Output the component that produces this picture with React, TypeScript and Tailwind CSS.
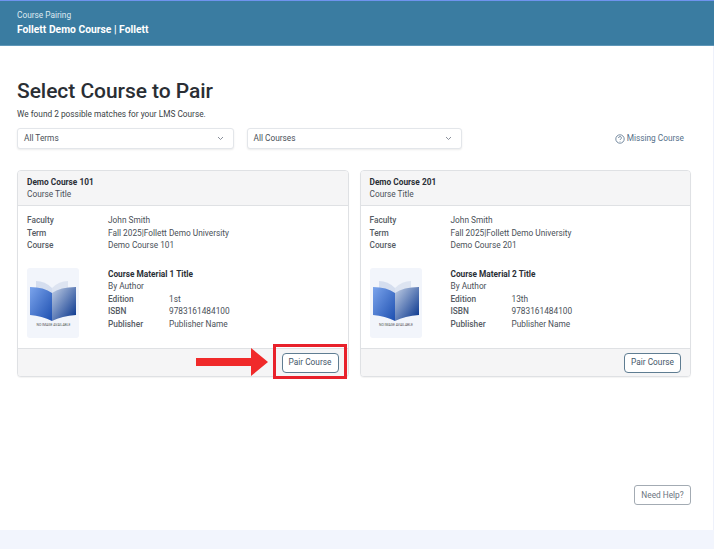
import React from "react";

function Book({ id }: { id: string }) {
  return (
    <div className="w-[52px] h-[70px] rounded-[3px] bg-[#f2f5fb] flex flex-col items-start pl-[1px] pt-[3px] shrink-0">
      <svg width="48" height="52" viewBox="0 0 48 52">
        <defs>
          <linearGradient id={id + "l"} x1="0" y1="0" x2="1" y2="1">
            <stop offset="0" stopColor="#7ba4ec" />
            <stop offset="1" stopColor="#1d4fb0" />
          </linearGradient>
          <linearGradient id={id + "r"} x1="0" y1="0" x2="1" y2="1">
            <stop offset="0" stopColor="#c3d0e6" />
            <stop offset="1" stopColor="#002f8a" />
          </linearGradient>
        </defs>
        <path d="M8 10 Q17 10 24 17 L24 36 L8 36 Z" fill="#d5deef" />
        <path d="M40 10 Q31 10 24 17 L24 36 L40 36 Z" fill="#dde4f1" />
        <path d="M2 16 Q16 16 24 22 L24 50 Q14 45 2 44 Z" fill={`url(#${id}l)`} />
        <path d="M48 16 Q32 16 24 22 L24 50 Q34 45 48 44 Z" fill={`url(#${id}r)`} />
      </svg>
      <span className="w-full text-center text-[3.4px] leading-[4px] text-[#555] whitespace-nowrap">NO IMAGE AVAILABLE</span>
    </div>
  );
}

function Card({ code, material, edition }: { code: string; material: string; edition: string }) {
  return (
    <div className="flex-1 border border-[#dfe1e4] rounded-[4px] bg-white overflow-hidden shadow-[0_1px_1px_rgba(0,0,0,0.05)]">
      <div className="h-[35px] bg-[#f5f5f6] border-b border-[#dfe1e4] pl-[9px] pt-[5px]">
        <div className="font-bold text-[#2a2f36] leading-[12px]">{code}</div>
        <div className="text-[#4a5058] leading-[12px]">Course Title</div>
      </div>
      <div className="h-[142px] pl-[9px] pt-[8px] leading-[12.5px] text-[#4a5058]">
        <div className="grid grid-cols-[81px_1fr]">
          <span className="font-medium text-[#565c64]">Faculty</span><span>John Smith</span>
          <span className="font-medium text-[#565c64]">Term</span><span>Fall 2025|Follett Demo University</span>
          <span className="font-medium text-[#565c64]">Course</span><span>{code}</span>
        </div>
        <div className="flex gap-[29px] mt-[16px]">
          <Book id={code.replace(/ /g, "")} />
          <div>
            <div className="font-bold text-[#2a2f36]">{material}</div>
            <div>By Author</div>
            <div className="grid grid-cols-[61px_1fr]">
              <span className="font-medium text-[#565c64]">Edition</span><span>{edition}</span>
              <span className="font-medium text-[#565c64]">ISBN</span><span>9783161484100</span>
              <span className="font-medium text-[#565c64]">Publisher</span><span>Publisher Name</span>
            </div>
          </div>
        </div>
      </div>
      <div className="h-[28px] bg-[#f5f5f6] border-t border-[#dfe1e4] flex items-center justify-end pr-[9px]">
        <button className="w-[57px] h-[20px] border border-[#5f7d92] rounded-[4px] bg-white text-[#3f5568] text-[8.3px]">Pair Course</button>
      </div>
    </div>
  );
}

function Select({ label, width }: { label: string; width: string }) {
  return (
    <div className={`${width} h-[21px] border border-[#e3e6ea] rounded-[3px] bg-white shadow-[0_1px_2px_rgba(0,0,0,0.08)] flex items-center justify-between pl-[6px] pr-[9px] text-[#4a5058]`}>
      <span>{label}</span>
      <svg width="7" height="5" viewBox="0 0 7 5" fill="none" stroke="#6b7280" strokeWidth="0.8"><path d="M1 1l2.5 2.5L6 1" /></svg>
    </div>
  );
}

export default function App() {
  return (
    <div className="relative w-[714px] h-[549px] overflow-hidden bg-white text-[8.3px] font-['Roboto',sans-serif]">
      <div className="h-[46px] bg-[#3a7ca1] border-t border-[#6f93ee] border-b-[#5f97b8] border-b pl-[17px] pt-[9px] text-white">
        <div className="leading-[11px] text-[#dfeaf1]">Course Pairing</div>
        <div className="text-[10.3px] font-bold leading-[14px] mt-[2px]">Follett Demo Course | Follett</div>
      </div>
      <div className="h-[484px] pl-[17px] pr-[22px] pt-[33px] border-r border-[#eef1fb]">
        <h1 className="text-[21px] leading-[24px] font-medium tracking-[-0.05px] text-[#2a2e34]">Select Course to Pair</h1>
        <p className="mt-[5px] leading-[12px] text-[#3a3f46]">We found 2 possible matches for your LMS Course.</p>
        <div className="flex items-center mt-[8px]">
          <Select label="All Terms" width="w-[217px]" />
          <div className="w-[12.5px]" />
          <Select label="All Courses" width="w-[215.5px]" />
          <div className="ml-auto flex items-center gap-[2px] text-[#55708a] pr-[7px]">
            <svg width="10" height="10" viewBox="0 0 10 10" fill="none" stroke="#55708a" strokeWidth="0.8">
              <circle cx="5" cy="5" r="4.2" />
              <path d="M3.6 4a1.4 1.4 0 1 1 2 1.2c-.4.2-.6.4-.6.8" />
              <path d="M5 7.1v.5" />
            </svg>
            <span>Missing Course</span>
          </div>
        </div>
        <div className="flex gap-[11px] mt-[21px]">
          <Card code="Demo Course 101" material="Course Material 1 Title" edition="1st" />
          <Card code="Demo Course 201" material="Course Material 2 Title" edition="13th" />
        </div>
      </div>
      <div className="h-[19px] bg-[#f2f5fd]" />
      <svg className="absolute left-[196px] top-[348px]" width="72" height="28" viewBox="0 0 72 28">
        <path d="M0 10h55V0l17 14-17 14V18H0z" fill="#f02a2a" />
      </svg>
      <div className="absolute left-[273px] top-[344px] w-[74px] h-[35px] border-[3px] border-[#e8212b]" />
      <button className="absolute left-[634px] top-[485px] w-[57px] h-[20px] border border-[#a3abb3] rounded-[3px] bg-white text-[#6a7480] text-[8.3px]">Need Help?</button>
    </div>
  );
}
